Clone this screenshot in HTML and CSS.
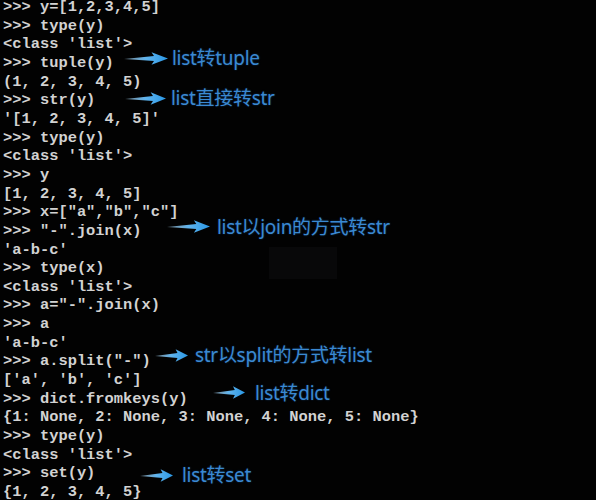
FILE: index.html
```html
<!DOCTYPE html>
<html>
<head>
<meta charset="utf-8">
<link rel="stylesheet" href="styles.css">
</head>
<body>
<svg class="defs" width="0" height="0">
  <defs>
    <linearGradient id="ag" x1="0" y1="0" x2="1" y2="0">
      <stop offset="0" stop-color="#b9def7" stop-opacity="0.55"/>
      <stop offset="0.5" stop-color="#5fb4ee"/>
      <stop offset="1" stop-color="#2a98e6"/>
    </linearGradient>
  </defs>
</svg>
<div class="console">
  <div class="row">&gt;&gt;&gt; y=[1,2,3,4,5]</div>
  <div class="row">&gt;&gt;&gt; type(y)</div>
  <div class="row">&lt;class 'list'&gt;</div>
  <div class="row">&gt;&gt;&gt; tuple(y)<span class="note n1"><svg class="arrow" viewBox="0 0 44 14" preserveAspectRatio="none"><path d="M0 7.6 L30 4.4 L27.5 0.3 L44 7 L27.5 13.7 L30 9.8 Z" fill="url(#ag)"/></svg><span class="label">list转tuple</span></span></div>
  <div class="row">(1, 2, 3, 4, 5)</div>
  <div class="row">&gt;&gt;&gt; str(y)<span class="note n2"><svg class="arrow" viewBox="0 0 44 14" preserveAspectRatio="none"><path d="M0 7.6 L30 4.4 L27.5 0.3 L44 7 L27.5 13.7 L30 9.8 Z" fill="url(#ag)"/></svg><span class="label">list直接转str</span></span></div>
  <div class="row">'[1, 2, 3, 4, 5]'</div>
  <div class="row">&gt;&gt;&gt; type(y)</div>
  <div class="row">&lt;class 'list'&gt;</div>
  <div class="row">&gt;&gt;&gt; y</div>
  <div class="row">[1, 2, 3, 4, 5]</div>
  <div class="row">&gt;&gt;&gt; x=["a","b","c"]</div>
  <div class="row">&gt;&gt;&gt; "-".join(x)<span class="note n3"><svg class="arrow" viewBox="0 0 44 14" preserveAspectRatio="none"><path d="M0 7.6 L30 4.4 L27.5 0.3 L44 7 L27.5 13.7 L30 9.8 Z" fill="url(#ag)"/></svg><span class="label">list以join的方式转str</span></span></div>
  <div class="row">'a-b-c'<span class="patch"></span></div>
  <div class="row">&gt;&gt;&gt; type(x)</div>
  <div class="row">&lt;class 'list'&gt;</div>
  <div class="row">&gt;&gt;&gt; a="-".join(x)</div>
  <div class="row">&gt;&gt;&gt; a</div>
  <div class="row">'a-b-c'</div>
  <div class="row">&gt;&gt;&gt; a.split("-")<span class="note n4"><svg class="arrow" viewBox="0 0 44 14" preserveAspectRatio="none"><path d="M0 7.6 L30 4.4 L27.5 0.3 L44 7 L27.5 13.7 L30 9.8 Z" fill="url(#ag)"/></svg><span class="label">str以split的方式转list</span></span></div>
  <div class="row">['a', 'b', 'c']</div>
  <div class="row">&gt;&gt;&gt; dict.fromkeys(y)<span class="note n5"><svg class="arrow" viewBox="0 0 44 14" preserveAspectRatio="none"><path d="M0 7.6 L30 4.4 L27.5 0.3 L44 7 L27.5 13.7 L30 9.8 Z" fill="url(#ag)"/></svg><span class="label">list转dict</span></span></div>
  <div class="row">{1: None, 2: None, 3: None, 4: None, 5: None}</div>
  <div class="row">&gt;&gt;&gt; type(y)</div>
  <div class="row">&lt;class 'list'&gt;</div>
  <div class="row">&gt;&gt;&gt; set(y)<span class="note n6"><svg class="arrow" viewBox="0 0 44 14" preserveAspectRatio="none"><path d="M0 7.6 L30 4.4 L27.5 0.3 L44 7 L27.5 13.7 L30 9.8 Z" fill="url(#ag)"/></svg><span class="label">list转set</span></span></div>
  <div class="row">{1, 2, 3, 4, 5}</div>
</div>
</body>
</html>
```
FILE: styles.css
```css
html, body {
  margin: 0;
  padding: 0;
  background: #020202;
  width: 596px;
  height: 500px;
  overflow: hidden;
}
.defs {
  position: absolute;
  width: 0;
  height: 0;
}
.console {
  display: flex;
  flex-direction: column;
  margin-top: -1.8px;
  padding-left: 3px;
  font-family: "Liberation Mono", "DejaVu Sans Mono", monospace;
  font-weight: bold;
  font-size: 15.4px;
  color: #d2d2d2;
  white-space: pre;
}
.row {
  position: relative;
  height: 18.65px;
  line-height: 18.65px;
}
.note {
  position: absolute;
  display: flex;
  align-items: center;
  height: 24px;
}
.arrow {
  display: block;
  height: 13px;
}
.label {
  font-family: "Noto Sans", "Noto Sans CJK SC", sans-serif;
  font-weight: normal;
  font-size: 19px;
  line-height: 24px;
  color: #3a89d2;
  letter-spacing: -0.3px;
  text-shadow: 0 0 2px rgba(40, 120, 210, 0.45);
}
.n1 { left: 121px; top: -8px; }
.n1 .arrow { width: 44px; margin-right: 4px; }
.n2 { left: 122px; top: -5px; }
.n2 .arrow { width: 41px; margin-right: 5px; }
.n3 { left: 164px; top: -7px; }
.n3 .arrow { width: 43px; margin-right: 7px; }
.n4 { left: 152px; top: -9px; }
.n4 .arrow { width: 33px; margin-right: 7px; }
.n5 { left: 210px; top: -9px; }
.n5 .arrow { width: 32px; margin-right: 10px; }
.n6 { left: 137px; top: -1px; }
.n6 .arrow { width: 33px; margin-right: 9px; }
.patch {
  position: absolute;
  left: 266px;
  top: 6px;
  width: 68px;
  height: 32px;
  background: #080809;
}
```
